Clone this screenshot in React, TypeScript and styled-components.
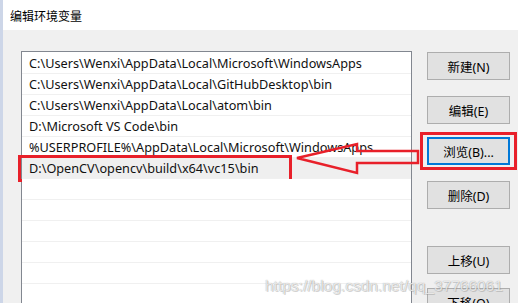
import React from "react";
import styled, { createGlobalStyle } from "styled-components";

const GlobalStyle = createGlobalStyle`
  html, body {
    margin: 0;
    padding: 0;
    background: #ffffff;
  }
  body {
    font-family: "Noto Sans", "Noto Sans CJK SC", sans-serif;
    font-size: 12px;
    color: #000;
  }
`;

const Window = styled.div`
  position: relative;
  width: 515px;
  height: 303px;
  border-left: 3px solid #cdd6e8;
  background: #f0f0f0;
  overflow: hidden;
`;

const TitleBar = styled.div`
  height: 30px;
  background: #ffffff;
  display: flex;
  align-items: center;
  padding-left: 7px;
  font-family: "Noto Sans CJK SC", sans-serif;
  font-size: 12px;
  color: #000;
`;

const Body = styled.div`
  display: flex;
  align-items: flex-start;
  padding: 21px 0 0 18px;
`;

const ListBox = styled.div`
  width: 389px;
  height: 260px;
  padding-top: 1px;
  border: 1px solid #828790;
  border-bottom: none;
  background: #ffffff;
  display: flex;
  flex-direction: column;
`;

const Row = styled.div<{ $selected?: boolean }>`
  position: relative;
  height: 20px;
  flex: none;
  border-bottom: 1px solid #f0f0f0;
  background: ${(p) => (p.$selected ? "#efefef" : "#ffffff")};
  display: flex;
  align-items: center;
  padding-left: 7px;
  white-space: nowrap;
  font-family: "Noto Sans", "Noto Sans CJK SC", sans-serif;
  font-size: 12.7px;
  color: #111;
`;

const RowMark = styled.div`
  position: absolute;
  left: -4px;
  top: -3px;
  width: 268px;
  height: 21px;
  border: 3px solid #e8202a;
  pointer-events: none;
`;

const ButtonColumn = styled.div`
  display: flex;
  flex-direction: column;
  margin-left: 15px;
  padding-top: 1px;
`;

const Button = styled.div<{ $gap: number; $focused?: boolean }>`
  position: relative;
  box-sizing: border-box;
  width: 83px;
  height: 28px;
  margin-top: ${(p) => p.$gap}px;
  background: #e1e1e1;
  border: ${(p) => (p.$focused ? "2px solid #0078d7" : "1px solid #adadad")};
  display: flex;
  align-items: center;
  justify-content: center;
  font-family: "Noto Sans", "Noto Sans CJK SC", sans-serif;
  font-size: 12.5px;
  color: #000;
`;

const ButtonMark = styled.div`
  position: absolute;
  left: -9px;
  top: -7px;
  width: 91px;
  height: 32px;
  border: 3px solid #e8202a;
  pointer-events: none;
`;

const Arrow = styled.svg`
  position: absolute;
  left: 0;
  top: 0;
  pointer-events: none;
`;

const Watermark = styled.div`
  position: absolute;
  left: 262px;
  top: 277px;
  font-family: "Liberation Sans", sans-serif;
  font-size: 15.5px;
  color: rgba(255, 255, 255, 0.75);
  text-shadow: 0 0 1px rgba(110, 110, 110, 0.7), 1px 1px 0 rgba(150, 150, 150, 0.35);
  white-space: nowrap;
  pointer-events: none;
`;

const paths = [
  "C:\\Users\\Wenxi\\AppData\\Local\\Microsoft\\WindowsApps",
  "C:\\Users\\Wenxi\\AppData\\Local\\GitHubDesktop\\bin",
  "C:\\Users\\Wenxi\\AppData\\Local\\atom\\bin",
  "D:\\Microsoft VS Code\\bin",
  "%USERPROFILE%\\AppData\\Local\\Microsoft\\WindowsApps",
  "D:\\OpenCV\\opencv\\build\\x64\\vc15\\bin",
];

const buttons = [
  { label: "新建(N)", gap: 0 },
  { label: "编辑(E)", gap: 16 },
  { label: "浏览(B)...", gap: 13, focused: true },
  { label: "删除(D)", gap: 16 },
  { label: "上移(U)", gap: 37 },
  { label: "下移(O)", gap: 14 },
];

export default function App() {
  const rows = [...paths, "", "", "", "", "", "", ""];
  return (
    <>
      <GlobalStyle />
      <Window>
        <TitleBar>编辑环境变量</TitleBar>
        <Body>
          <ListBox>
            {rows.map((p, i) => (
              <Row key={i} $selected={i === 5}>
                {p}
                {i === 5 && <RowMark />}
              </Row>
            ))}
          </ListBox>
          <ButtonColumn>
            {buttons.map((b) => (
              <Button key={b.label} $gap={b.gap} $focused={b.focused}>
                {b.label}
                {b.focused && <ButtonMark />}
              </Button>
            ))}
          </ButtonColumn>
        </Body>
        <Arrow width="515" height="303" viewBox="0 0 515 303">
          <polygon
            points="294,158 354,144 354,151 415,151 415,163 354,163 354,173"
            fill="none"
            stroke="#e8202a"
            strokeWidth="2.5"
            strokeLinejoin="miter"
          />
        </Arrow>
        <Watermark>https://blog.csdn.net/qq_37766061</Watermark>
      </Window>
    </>
  );
}
